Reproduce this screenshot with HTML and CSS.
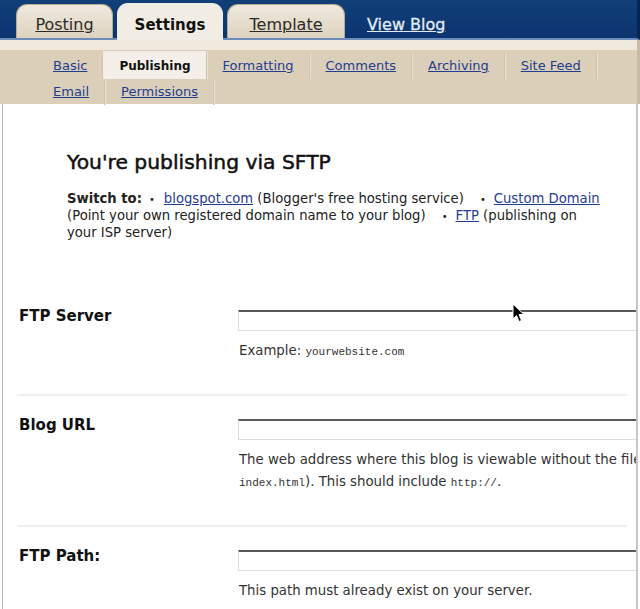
FILE: index.html
```html
<!DOCTYPE html>
<html lang="en">
<head>
  <meta charset="UTF-8" />
  <title>Blogger: Settings | Publishing</title>
  <link rel="stylesheet" href="styles.css">
</head>
<body>
  <header class="topbar">
    <a class="tab" href="#">Posting</a>
    <a class="tab tab-active" href="#">Settings</a>
    <a class="tab tab-wide" href="#">Template</a>
    <a class="view-blog" href="#">View Blog</a>
  </header>

  <nav class="subnav">
    <ul>
      <li><a href="#">Basic</a></li>
      <li class="current">Publishing</li>
      <li><a href="#">Formatting</a></li>
      <li><a href="#">Comments</a></li>
      <li><a href="#">Archiving</a></li>
      <li><a href="#">Site Feed</a></li>
      <li><a href="#">Email</a></li>
      <li><a href="#">Permissions</a></li>
    </ul>
  </nav>

  <main class="content">
    <section class="intro">
      <h2>You're publishing via SFTP</h2>
      <p>
        <strong>Switch to:</strong><span class="dot first">&bull;</span><a href="#">blogspot.com</a> (Blogger's free hosting service)<span class="dot">&bull;</span><a href="#">Custom Domain</a>
        (Point your own registered domain name to your blog)<span class="dot">&bull;</span><a href="#">FTP</a> (publishing on your ISP server)
      </p>
    </section>

    <div class="field">
      <label for="ftpServer">FTP Server</label>
      <div class="control">
        <input type="text" id="ftpServer" />
        <p class="hint">Example: <code>yourwebsite.com</code></p>
      </div>
    </div>

    <div class="field">
      <label for="blogUrl">Blog URL</label>
      <div class="control">
        <input type="text" id="blogUrl" />
        <p class="hint hint-wide">The web address where this blog is viewable without the filename (ending in<br><code>index.html</code>). This should include <code>http://</code>.</p>
      </div>
    </div>

    <div class="field">
      <label for="ftpPath">FTP Path:</label>
      <div class="control">
        <input type="text" id="ftpPath" />
        <p class="hint">This path must already exist on your server.</p>
      </div>
    </div>

    <!-- mouse pointer left in the shot -->
    <svg class="pointer" width="13" height="20" viewBox="0 0 13 20">
      <path d="M1 1 L1 16 L4.5 12.5 L7 18.5 L9.5 17.5 L7 11.5 L12 11.5 Z" fill="#000" stroke="#fff" stroke-width="1"/>
    </svg>
  </main>
</body>
</html>
```

FILE: styles.css
```css
body {
  margin: 0;
  font-family: "DejaVu Sans", sans-serif;
  color: #222;
  background: #fff;
  overflow: hidden;
}

/* top tabs */
.topbar {
  display: flex;
  align-items: flex-end;
  height: 38px;
  padding-left: 16px;
  background: linear-gradient(#123f78, #0b3470);
  border-bottom: 2px solid #6d8cbc;
  border-right: 3px solid #072552;
}

.tab {
  display: block;
  width: 97px;
  height: 34px;
  margin-right: 4px;
  box-sizing: border-box;
  padding-top: 10px;
  text-align: center;
  font-size: 16px;
  color: #2a2a2a;
  background: linear-gradient(#efe9de, #ddd2bf);
  border-radius: 11px 11px 0 0;
  border: 1px solid #b9ab93;
  border-bottom: none;
}

.tab-active {
  width: 106px;
  height: 37px;
  margin-bottom: -2px;
  padding-top: 12px;
  font-size: 15px;
  font-weight: bold;
  color: #111;
  text-decoration: none;
  background: #f1ede5;
  border-color: #f1ede5;
}

.tab-wide {
  width: 118px;
}

.view-blog {
  margin: 0 0 4px 18px;
  font-size: 16px;
  color: #e4ecf7;
  -webkit-text-stroke: 0.3px #e4ecf7;
}

/* secondary nav */
.subnav {
  background: linear-gradient(#efe9de 0, #efe9de 10px, #dbcfba 10px);
  padding: 13px 0 0 37px;
  height: 51px;
  border-right: 3px solid #c9bca6;
}

.subnav ul {
  display: flex;
  flex-wrap: wrap;
  width: 600px;
  margin: 0;
  padding: 0;
  list-style: none;
}

.subnav li {
  height: 26px;
  line-height: 26px;
  padding: 0 15px 0 16px;
  font-size: 13px;
  border-right: 1px solid #cfc3ad;
  box-shadow: 1px 0 0 #e9e2d5;
}

.subnav a {
  color: #1f3d8f;
}

.subnav .current {
  margin-top: -2px;
  height: 28px;
  line-height: 30px;
  font-size: 12px;
  font-weight: bold;
  color: #111;
  background: #f4f0e9;
}

/* page body */
.content {
  position: relative;
  height: 505px;
  margin-left: 2px;
  width: 633px;
  border-left: 1px solid #b8b8b8;
  border-right: 2px solid #c8c8c8;
  overflow: hidden;
}

.intro {
  padding: 46px 0 46px 64px;
}

.intro h2 {
  margin: 0 0 16px;
  font-size: 20.3px;
  line-height: 24px;
  font-weight: normal;
  color: #111;
  -webkit-text-stroke: 0.5px #111;
}

.intro p {
  margin: 0;
  width: 536px;
  font-size: 13.2px;
  line-height: 17px;
  color: #222;
}

.intro a {
  color: #1f3d8f;
}

.dot {
  margin: 0 8px 0 16px;
  font-size: 10px;
  line-height: 1;
}

.dot.first {
  margin: 0 9px 0 7px;
}

.field {
  display: grid;
  grid-template-columns: 221px 480px;
  margin-left: 14px;
  width: 610px;
  padding: 23px 0 31px;
  border-bottom: 2px solid #efefef;
}

.field:last-of-type {
  border-bottom: none;
}

.field label {
  margin-top: -3px;
  padding-left: 2px;
  font-size: 15px;
  line-height: 18px;
  font-weight: bold;
  color: #111;
}

.control input {
  display: block;
  width: 460px;
  height: 21px;
  box-sizing: border-box;
  margin: 0;
  border: 1px solid #dedede;
  border-top: 2px solid #5a5a5a;
  background: #fff;
}

.hint {
  margin: 9px 0 0 1px;
  font-size: 13.3px;
  line-height: 22px;
  color: #333;
}

.hint-wide {
  white-space: nowrap;
}

.hint code {
  font-family: "Liberation Mono", monospace;
  font-size: 11px;
}

.pointer {
  position: absolute;
  left: 509px;
  top: 199px;
}
```
